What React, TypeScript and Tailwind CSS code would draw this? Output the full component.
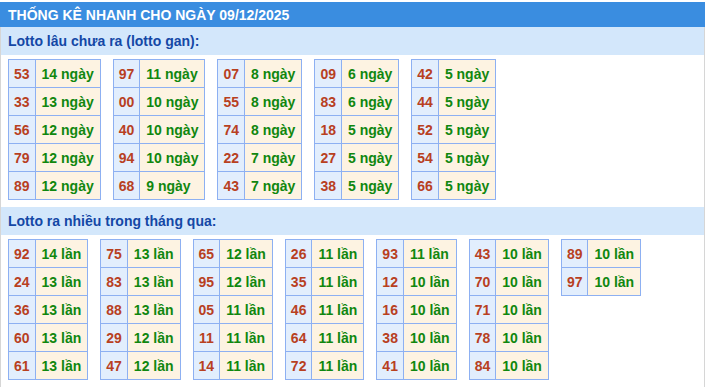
import React from "react";

type Item = [string, string];

const gan: Item[][] = [
  [["53", "14 ngày"], ["33", "13 ngày"], ["56", "12 ngày"], ["79", "12 ngày"], ["89", "12 ngày"]],
  [["97", "11 ngày"], ["00", "10 ngày"], ["40", "10 ngày"], ["94", "10 ngày"], ["68", "9 ngày"]],
  [["07", "8 ngày"], ["55", "8 ngày"], ["74", "8 ngày"], ["22", "7 ngày"], ["43", "7 ngày"]],
  [["09", "6 ngày"], ["83", "6 ngày"], ["18", "5 ngày"], ["27", "5 ngày"], ["38", "5 ngày"]],
  [["42", "5 ngày"], ["44", "5 ngày"], ["52", "5 ngày"], ["54", "5 ngày"], ["66", "5 ngày"]],
];

const nhieu: Item[][] = [
  [["92", "14 lần"], ["24", "13 lần"], ["36", "13 lần"], ["60", "13 lần"], ["61", "13 lần"]],
  [["75", "13 lần"], ["83", "13 lần"], ["88", "13 lần"], ["29", "12 lần"], ["47", "12 lần"]],
  [["65", "12 lần"], ["95", "12 lần"], ["05", "11 lần"], ["11", "11 lần"], ["14", "11 lần"]],
  [["26", "11 lần"], ["35", "11 lần"], ["46", "11 lần"], ["64", "11 lần"], ["72", "11 lần"]],
  [["93", "11 lần"], ["12", "10 lần"], ["16", "10 lần"], ["38", "10 lần"], ["41", "10 lần"]],
  [["43", "10 lần"], ["70", "10 lần"], ["71", "10 lần"], ["78", "10 lần"], ["84", "10 lần"]],
  [["89", "10 lần"], ["97", "10 lần"]],
];

function LotoTable({ rows }: { rows: Item[] }) {
  return (
    <table className="border-collapse self-start">
      <tbody>
        {rows.map(([num, val], i) => (
          <tr key={i} className="h-[28px]">
            <td className="border border-[#8db0f2] bg-[#e2eefd] px-[5px] text-center text-[#b8401f]">
              {num}
            </td>
            <td className="border border-[#8db0f2] bg-[#fdf3e2] px-[6px] text-[#10870f] whitespace-nowrap">
              {val}
            </td>
          </tr>
        ))}
      </tbody>
    </table>
  );
}

function Section({ title, groups }: { title: string; groups: Item[][] }) {
  return (
    <div>
      <div className="h-[28px] bg-[#d3e7fb] flex items-center pl-[7px] text-[#1448a6]">
        {title}
      </div>
      <div className="flex flex-wrap gap-3 pl-[7px] pt-[4px] pb-[7px]">
        {groups.map((g, i) => (
          <LotoTable key={i} rows={g} />
        ))}
      </div>
    </div>
  );
}

export default function App() {
  return (
    <div
      className="w-[705px] bg-white pt-[2px] text-[14px] font-bold leading-none"
      style={{ fontFamily: '"Liberation Sans", Arial, sans-serif' }}
    >
      <div className="h-[25px] bg-[#3a8de0] text-white flex items-center pl-[8px]">
        THỐNG KÊ NHANH CHO NGÀY 09/12/2025
      </div>
      <div className="border-x border-[#d6d6d6]">
        <Section title="Lotto lâu chưa ra (lotto gan):" groups={gan} />
        <Section title="Lotto ra nhiều trong tháng qua:" groups={nhieu} />
      </div>
    </div>
  );
}
